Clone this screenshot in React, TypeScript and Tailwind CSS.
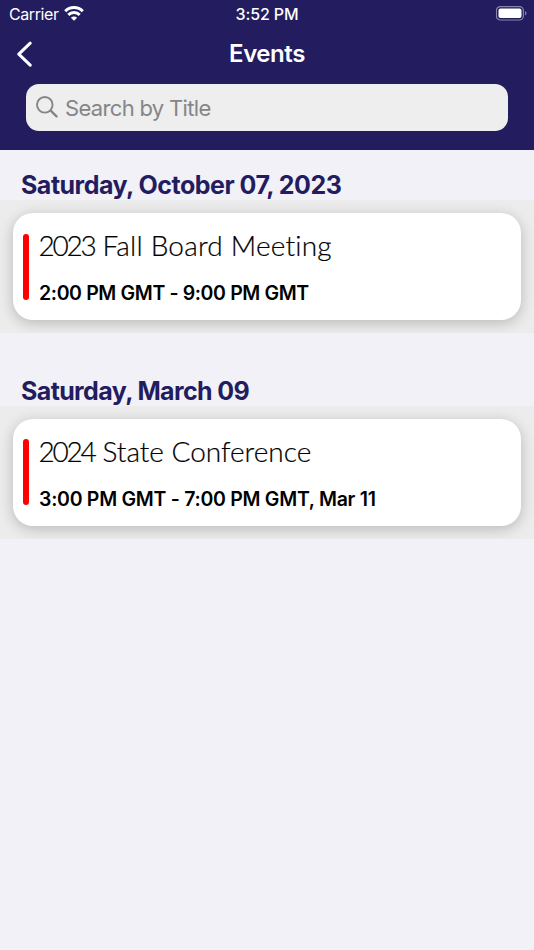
import React from "react";

type EventItem = {
  date: string;
  dateClass: string;
  year: string;
  title: string;
  titleClass: string;
  time: string;
  timeClass: string;
};

const events: EventItem[] = [
  {
    date: "Saturday, October 07, 2023",
    dateClass: "tracking-[-0.5px]",
    year: "2023",
    title: "Fall Board Meeting",
    titleClass: "tracking-[0.2px]",
    time: "2:00 PM GMT - 9:00 PM GMT",
    timeClass: "tracking-[-0.37px]",
  },
  {
    date: "Saturday, March 09",
    dateClass: "tracking-[-0.62px]",
    year: "2024",
    title: "State Conference",
    titleClass: "tracking-[0px]",
    time: "3:00 PM GMT - 7:00 PM GMT, Mar 11",
    timeClass: "tracking-[-0.28px]",
  },
];

function StatusBar() {
  return (
    <div className="grid h-7 grid-cols-3 items-center pl-[9px] pr-[7px] text-[16px] leading-7">
      <div className="flex items-center gap-[5px]">
        <span className="tracking-[-0.4px]">Carrier</span>
        <svg className="-mt-[2px]" width="20" height="15" viewBox="0 0 20 15" fill="none" stroke="white" strokeWidth="3">
          <path d="M1.2 5.2a12.6 12.6 0 0 1 17.6 0" />
          <path d="M4.3 8.9a8.2 8.2 0 0 1 11.4 0" />
          <path d="M10 14.8 6.9 11.7a4.4 4.4 0 0 1 6.2 0Z" fill="white" stroke="none" />
        </svg>
      </div>
      <span className="-ml-[2px] text-center font-medium tracking-[-0.1px]">3:52 PM</span>
      <svg className="-mt-[1px] justify-self-end" width="31" height="16" viewBox="0 0 31 16" fill="none">
        <rect x=".4" y=".6" width="27" height="13.4" rx="4" stroke="#8784ac" strokeWidth="1.2" />
        <rect x="2.5" y="2.6" width="23" height="9.4" rx="2" fill="white" />
        <path d="M29 5.1c2 .8 2 3.6 0 4.4Z" fill="#8784ac" />
      </svg>
    </div>
  );
}

function Header() {
  return (
    <header className="h-[150px] bg-[#231d5f] text-white">
      <StatusBar />
      <div className="grid h-[56px] grid-cols-3 items-center px-4 pb-1">
        <svg width="18" height="26" viewBox="0 0 18 26" fill="none" stroke="white" strokeWidth="3" strokeLinecap="round" strokeLinejoin="round">
          <path d="M14.2 2.2 2.8 13.2l11.4 11" />
        </svg>
        <h1 className="text-center text-[24px] font-semibold leading-7 tracking-[-0.45px]">Events</h1>
      </div>
      <div className="mx-[26px] flex h-[46.5px] items-center gap-[7px] rounded-[13px] bg-[#eeeeee] pl-[10px] text-[#858589]">
        <svg width="22" height="22" viewBox="0 0 22 22" fill="none" stroke="currentColor" strokeWidth="1.9" strokeLinecap="round">
          <circle cx="8.8" cy="8.8" r="7.8" />
          <path d="m14.7 14.7 5.8 5.6" strokeWidth="2.4" />
        </svg>
        <span className="pt-[1px] text-[22px] leading-7 tracking-[-0.67px]">Search by Title</span>
      </div>
    </header>
  );
}

function EventSection({ event }: { event: EventItem }) {
  return (
    <section className="mb-[22.6px]">
      <h2 className={`h-[50px] whitespace-nowrap pl-[21px] pt-[20px] text-[25px] font-bold leading-[30px] text-[#231d5f] ${event.dateClass}`}>
        {event.date}
      </h2>
      <div className="h-[133px] overflow-hidden bg-[#ececec] p-[13px]">
        <article className="flex h-[107px] gap-[10.5px] rounded-[20px] bg-white pl-[10px] shadow-[0_3px_14px_rgba(0,0,0,0.22)]">
          <div className="mt-[20.5px] h-[66px] w-[5.5px] shrink-0 rounded-full bg-[#ff0000]" />
          <div className="whitespace-nowrap pt-[15px] text-black">
            <h3 className={`-ml-[0.5px] font-['Lato'] text-[28px] font-light leading-[34px] [-webkit-text-stroke:0.2px_black] ${event.titleClass}`}>
              <span className="tracking-[-2.2px]">{event.year} </span>
              <span className="ml-[2.4px]">{event.title}</span>
            </h3>
            <p className={`mt-[19px] text-[19.5px] font-semibold leading-6 ${event.timeClass}`}>{event.time}</p>
          </div>
        </article>
      </div>
    </section>
  );
}

export default function App() {
  return (
    <main className="h-[950px] w-[534px] overflow-hidden bg-[#f2f1f7] font-['Inter','Liberation_Sans',sans-serif]">
      <Header />
      {events.map((event) => (
        <EventSection key={event.date} event={event} />
      ))}
    </main>
  );
}
